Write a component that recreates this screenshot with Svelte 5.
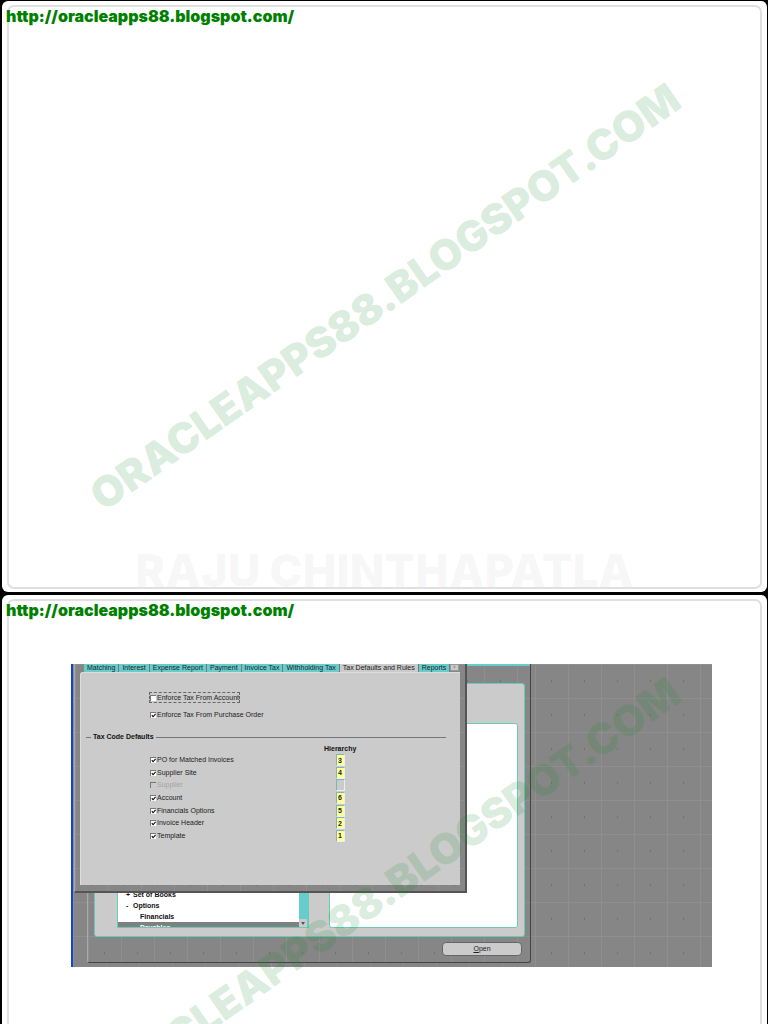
<script>
  const site = "http://oracleapps88.blogspot.com/"
  const stamp = "ORACLEAPPS88.BLOGSPOT.COM"
  const author = "RAJU CHINTHAPATLA"

  const tabs = [
    "Matching",
    "Interest",
    "Expense Report",
    "Payment",
    "Invoice Tax",
    "Withholding Tax",
    "Tax Defaults and Rules",
    "Reports",
  ]
  let activeTab = $state("Tax Defaults and Rules")

  let enforceAccount = $state(false)
  let enforceOrder = $state(true)

  let sources = $state([
    { id: "po", label: "PO for Matched Invoices", on: true, rank: "3" },
    { id: "site", label: "Supplier Site", on: true, rank: "4" },
    { id: "supplier", label: "Supplier", on: false, rank: "", disabled: true },
    { id: "account", label: "Account", on: true, rank: "6" },
    { id: "financials", label: "Financials Options", on: true, rank: "5" },
    { id: "header", label: "Invoice Header", on: true, rank: "2" },
    { id: "template", label: "Template", on: true, rank: "1" },
  ])
</script>

{#snippet marks()}
  <div class="marks" aria-hidden="true">
    <span class="stamp">{stamp}</span>
    <span class="author">{author}</span>
  </div>
{/snippet}

<main>
  <article class="slide">
    <div class="frame">
      <a class="site" href={site}>{site}</a>
    </div>
    {@render marks()}
  </article>

  <article class="slide">
    <div class="frame">
      <a class="site" href={site}>{site}</a>

      <div class="desktop">
        <section class="window navigator">
          <div class="titlebar"></div>
          <div class="body">
            <div class="tree">
              <ul>
                <li><span>+</span>Set of Books</li>
                <li><span>-</span>Options</li>
                <li class="child">Financials</li>
                <li class="child selected">Payables</li>
              </ul>
              <div class="track">
                <button aria-label="Scroll down">
                  <svg viewBox="0 0 8 8"><path d="M2 3h4L4 6z" fill="#555" /></svg>
                </button>
              </div>
            </div>
            <div class="pane"></div>
          </div>
          <button class="open"><u>O</u>pen</button>
        </section>

        <section class="window options">
          <nav class="tabs">
            {#each tabs as tab}
              <button class:active={tab == activeTab} onclick={() => (activeTab = tab)}>
                {tab}
              </button>
            {/each}
            <button class="more" aria-label="More tabs">
              <svg viewBox="0 0 12 8">
                <path d="M6 1v5M4 3h5M4 3l2-2" stroke="#888" fill="none" />
              </svg>
            </button>
          </nav>

          <form class="sheet">
            <div class="enforce">
              <label class="focused">
                <input type="checkbox" bind:checked={enforceAccount} />
                Enforce Tax From Account
              </label>
              <label>
                <input type="checkbox" bind:checked={enforceOrder} />
                Enforce Tax From Purchase Order
              </label>
            </div>

            <h2>Tax Code Defaults</h2>
            <h3>Hierarchy</h3>

            <div class="sources">
              {#each sources as source}
                <label class:off={source.disabled}>
                  <input type="checkbox" bind:checked={source.on} disabled={source.disabled} />
                  {source.label}
                </label>
                <input
                  class="rank"
                  type="text"
                  id={source.id}
                  aria-label="{source.label} hierarchy"
                  bind:value={source.rank}
                  disabled={source.disabled}
                />
              {/each}
            </div>
          </form>
        </section>
      </div>
    </div>
    {@render marks()}
  </article>
</main>

<style>
  :global(body) {
    background-color: black;
  }
  main {
    box-sizing: border-box;
    height: 100vh;
    padding: 1px 1px 0 2px;
    overflow: hidden;
    font-family: "Liberation Sans", Arial, sans-serif;
  }

  /* slides */

  .slide {
    position: relative;
    box-sizing: border-box;
    height: 591px;
    margin-bottom: 3px;
    padding: 4px 5px 3px;
    border-radius: 6px;
    background-color: white;
    overflow: hidden;
  }
  .frame {
    box-sizing: border-box;
    height: 100%;
    border: 2px solid #dfe1df;
    border-radius: 7px;
  }
  .site {
    display: block;
    width: max-content;
    margin-left: -3px;
    font: 900 16px/18px Inter, sans-serif;
    color: #008000;
    text-decoration: none;
  }
  .marks {
    position: absolute;
    inset: 0;
    pointer-events: none;
    font: 900 42px/42px Inter, sans-serif;
    white-space: nowrap;
  }
  .stamp {
    position: absolute;
    left: 50%;
    top: 50%;
    color: rgba(24, 144, 44, 0.18);
    transform: translate(-50%, -50%) rotate(-35deg);
  }
  .author {
    position: absolute;
    right: 0;
    bottom: 0;
    left: 0;
    font-size: 45px;
    color: rgba(0, 0, 0, 0.03);
    text-align: center;
  }

  /* desktop and windows */

  .desktop,
  .window {
    background-color: #868686;
    background-image: radial-gradient(#707070 1px, transparent 1px),
      linear-gradient(#8f8f8f 1px, transparent 1px),
      linear-gradient(90deg, #8f8f8f 1px, transparent 1px);
    background-size: 33px 34px;
  }
  .desktop {
    position: relative;
    box-sizing: border-box;
    height: 303px;
    margin: 45px 48px 0 62px;
    border-left: 2px solid #1243dc;
    overflow: hidden;
    font-size: 7px;
    line-height: 8px;
    color: #222;
  }
  .window {
    position: absolute;
    top: 0;
    box-sizing: border-box;
    border-right: 1px solid #444;
    border-bottom: 1px solid #444;
    border-left: 1px solid #aaa;
  }
  button {
    padding: 0;
    border: none;
    font: inherit;
    color: inherit;
  }
  svg {
    display: block;
    width: 100%;
    height: 100%;
  }

  /* navigator */

  .navigator {
    left: 14px;
    width: 444px;
    height: 299px;
    border-radius: 0 0 3px 3px;
  }
  .titlebar {
    height: 2px;
    background-color: #66cccc;
  }
  .body {
    display: flex;
    gap: 20px;
    box-sizing: border-box;
    height: 254px;
    margin: 17px 5px 0 6px;
    padding: 39px 6px 8px 22px;
    border: 1px solid #66ccb8;
    border-radius: 3px;
    background-color: #cbcbcb;
  }
  .tree,
  .pane {
    box-sizing: border-box;
    border: 1px solid #66ccb8;
    background-color: white;
  }
  .tree {
    display: flex;
    width: 192px;
    overflow: hidden;
  }
  .pane {
    flex: 1;
    border-radius: 3px;
  }
  ul {
    flex: 1;
    margin: 0;
    padding: 165px 0 0;
    list-style: none;
    font-weight: bold;
    line-height: 11px;
    color: #111;
  }
  li {
    height: 11px;
    padding-left: 8px;
  }
  li span {
    display: inline-block;
    width: 7px;
  }
  li.child {
    padding-left: 22px;
  }
  li.selected {
    background-color: #808080;
    color: white;
  }
  .track {
    display: flex;
    align-items: flex-end;
    width: 9px;
    background-color: #66cccc;
  }
  .track button {
    width: 8px;
    height: 8px;
    background-color: #cbcbcb;
  }
  .open {
    display: block;
    width: 80px;
    height: 14px;
    margin: 5px 8px 0 auto;
    border: 1px solid #666;
    border-radius: 4px;
    background-color: #cbcbcb;
    line-height: 12px;
  }

  /* payables options */

  .options {
    left: 1px;
    width: 393px;
    height: 229px;
    border-right: 2px solid #555;
    border-bottom: 2px solid #555;
  }
  .tabs {
    display: flex;
    height: 8px;
    margin: 0 6px 0 9px;
  }
  .tabs button {
    padding: 0 3px;
    border-right: 1px solid #777;
    background-color: #66cccc;
    white-space: nowrap;
  }
  .tabs button.active {
    background-color: #cbcbcb;
  }
  .tabs button.more {
    width: 11px;
    height: 7px;
    padding: 0;
    border: 1px solid #999;
    background-color: #cbcbcb;
  }
  .sheet {
    box-sizing: border-box;
    height: 213px;
    margin: 0 5px;
    padding: 19px 14px 0 5px;
    border-top: 1px solid #ddd;
    border-left: 1px solid #ddd;
    border-radius: 3px 0 0 0;
    background-color: #cbcbcb;
  }
  label {
    display: flex;
    align-items: center;
    gap: 1px;
    width: max-content;
  }
  .enforce {
    display: grid;
    gap: 6px;
    margin-left: 63px;
  }
  .enforce label {
    box-sizing: border-box;
    height: 11px;
    border: 1px solid transparent;
  }
  .enforce label.focused {
    border: 1px dashed #666;
  }
  h2,
  h3 {
    margin: 0;
    font-size: 7px;
    color: #111;
  }
  h2 {
    display: flex;
    align-items: center;
    gap: 2px;
    margin-top: 13px;
  }
  h2::before,
  h2::after {
    content: "";
    width: 5px;
    height: 1px;
    background-color: #777;
  }
  h2::after {
    flex: 1;
  }
  h3 {
    margin: 4px 0 1px 238px;
  }
  .sources {
    display: grid;
    grid-template-columns: 186px 9px;
    align-items: center;
    height: 88px;
    margin-left: 64px;
  }
  .off {
    color: #a4a4a4;
  }
  input[type="checkbox"] {
    appearance: none;
    width: 6px;
    height: 6px;
    margin: 0;
    border-top: 1px solid #777;
    border-left: 1px solid #777;
    background-color: white;
  }
  input[type="checkbox"]:checked {
    background-image: url("data:image/svg+xml,%3Csvg xmlns='http://www.w3.org/2000/svg' viewBox='0 0 6 6'%3E%3Cpath d='M1 2.5l1.5 2L5.5 1' fill='none' stroke='black' stroke-width='1.3'/%3E%3C/svg%3E");
  }
  input[type="checkbox"]:disabled {
    background-color: #cbcbcb;
  }
  .rank {
    box-sizing: border-box;
    width: 9px;
    height: 12px;
    padding: 0 0 0 1px;
    border: 1px solid #eee;
    border-top-color: #7fb5b5;
    border-left-color: #7fb5b5;
    background-color: #ffff99;
    font: bold 7px/10px "Liberation Sans", Arial, sans-serif;
    color: #222;
  }
  .rank:disabled {
    background-color: #cbcbcb;
  }
</style>
